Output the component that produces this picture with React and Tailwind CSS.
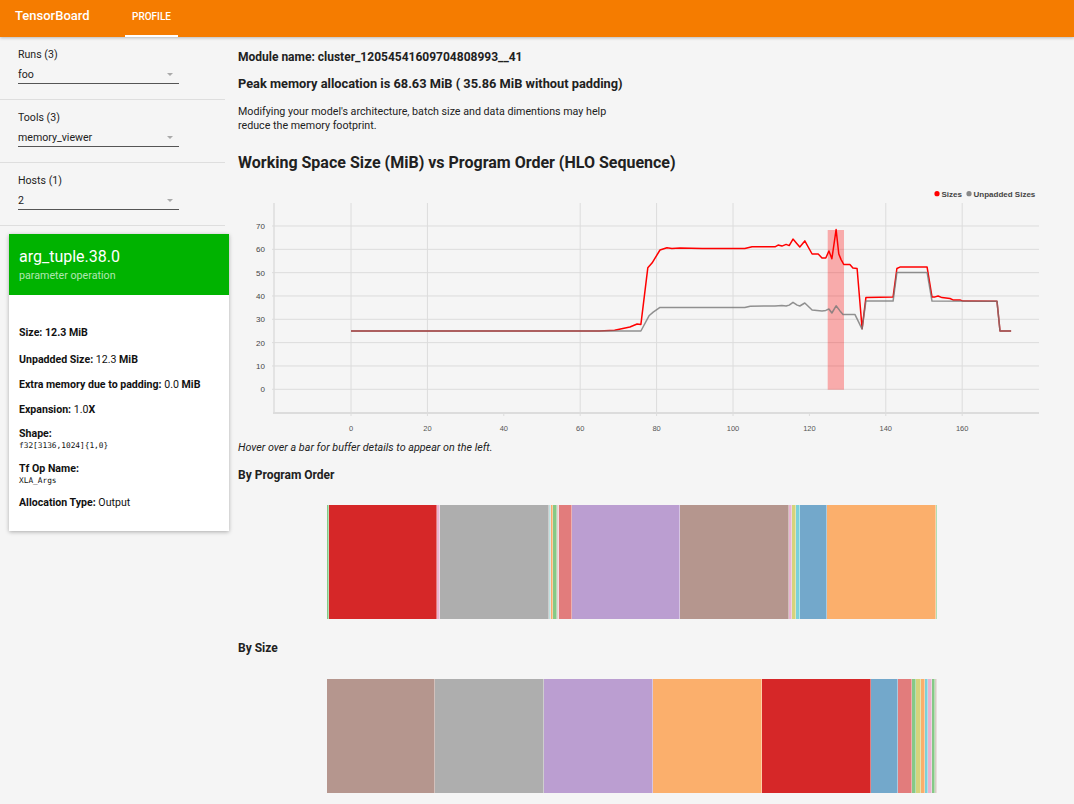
import React from 'react'

// series sampled from the reference chart: [hlo index, MiB]
const SIZES = [[0,25],[65,25],[69,25.3],[73,26.7],[74.9,28],[75.9,27.8],[77.7,52.1],[78.8,54.1],[80.9,59.7],[82.7,60.7],[84,60.4],[86.1,60.6],[92,60.4],[103.1,60.3],[105,61.1],[111,61.1],[111.8,61.8],[112.8,61.4],[113.9,62.1],[114.7,61.6],[115.7,64.4],[116.8,62.3],[117.5,61],[118.8,63.6],[120.7,58],[122.3,58],[123.3,56.3],[124.3,56.3],[125.1,59.3],[125.9,56],[127,68.5],[127.7,58],[128.3,55.6],[129,53.5],[130.6,53.5],[131.4,52],[132.5,51.8],[133.8,26],[134.8,39.3],[141.9,39.6],[142.9,51.8],[143.7,52.4],[150.8,52.4],[152.1,39.6],[152.9,39.6],[153.7,40],[154.7,39.3],[156.8,38.9],[157.6,38.3],[159.4,38.3],[160.2,37.8],[169.1,37.7],[169.9,25],[172.8,25]]
const UNPADDED = [[0,25],[75.9,25],[78,31.5],[79.1,33.1],[80.9,35.1],[86.1,35.1],[103.1,35],[104.5,35.6],[111,35.7],[112.8,35.9],[113.9,35.7],[114.7,36.1],[115.7,37.3],[116.8,36.1],[117.5,35.7],[118.8,37],[120.7,34],[123.3,33.6],[124.3,33.8],[125.1,34.4],[125.9,32.7],[127,35.8],[128,33.6],[128.8,32.1],[131.9,32.1],[133.8,25.8],[134.8,37.8],[141.9,37.8],[142.9,50.1],[150.8,50.1],[152.1,37.8],[169.1,37.7],[169.9,25],[172.8,25]]

const PROGRAM_ORDER = [
  [1.5, '#86c986'], [108.8, '#d62728'], [2.4, '#e8b4d2'], [109.3, '#aeaeae'], [2, '#bfe0e0'],
  [2, '#f9ae6b'], [4.5, '#86c986'], [1.2, '#e8d0d0'], [13.3, '#e27c7c'], [108.4, '#bb9ed1'],
  [108.9, '#b5968e'], [2.4, '#e8b4d2'], [4.3, '#d4d47c'], [4, '#7ad0da'], [27, '#73a8cb'],
  [109, '#fbaf6c'], [1, '#80c880'],
]
const BY_SIZE = [
  [108.3, '#b5968e'], [108.9, '#aeaeae'], [109.3, '#bb9ed1'], [108.5, '#fbaf6c'], [108.8, '#d62728'],
  [27.7, '#73a8cb'], [13.5, '#e27c7c'], [4, '#86c986'], [5.3, '#d4d47c'], [3.4, '#f9ae6b'],
  [3.6, '#7ad0da'], [3.4, '#e8b4d2'], [3.3, '#86c986'], [2, '#d8ccc4'],
]

const px = i => 113 + 3.82 * i
const py = v => 209.3 - 2.333 * v
const toPath = pts => pts.map(([i, v], k) => `${k ? 'L' : 'M'}${px(i).toFixed(1)} ${py(v).toFixed(1)}`).join(' ')

function Chart() {
  const yTicks = [0, 10, 20, 30, 40, 50, 60, 70]
  const xTicks = [0, 20, 40, 60, 80, 100, 120, 140, 160]
  const vLines = [0, 20, 60, 80, 100, 140, 160]
  return (
    <svg width="820" height="260" className="block font-['Liberation_Sans',Arial,sans-serif]">
      {/* legend */}
      <circle cx="699" cy="13.7" r="2.6" fill="#ff0000" />
      <text x="703.5" y="16.6" fontSize="8" fontWeight="700" fill="#444">Sizes</text>
      <circle cx="731" cy="13.7" r="2.6" fill="#888" />
      <text x="735.5" y="16.6" fontSize="8" fontWeight="700" fill="#444">Unpadded Sizes</text>

      {/* grid */}
      {yTicks.map(v => (
        <g key={v}>
          <line x1="34" x2="801" y1={py(v)} y2={py(v)} stroke="#dcdcdc" strokeWidth="1" />
          <text x="27" y={py(v) + 3} fontSize="8" fill="#444" textAnchor="end">{v}</text>
        </g>
      ))}
      {vLines.map(i => (
        <line key={i} x1={px(i)} x2={px(i)} y1="23" y2="233" stroke="#dcdcdc" strokeWidth="1" />
      ))}
      {xTicks.map(i => (
        <g key={i}>
          <line x1={px(i)} x2={px(i)} y1="233" y2="236" stroke="#dcdcdc" strokeWidth="1" />
          <text x={px(i)} y="250.5" fontSize="7.5" fill="#555" textAnchor="middle">{i}</text>
        </g>
      ))}
      <line x1="36" x2="36" y1="23" y2="234" stroke="#dcdcdc" strokeWidth="1.5" />
      <line x1="35" x2="801" y1="233" y2="233" stroke="#dcdcdc" strokeWidth="2" />

      {/* highlighted hlo */}
      <rect x="589.7" y="50" width="16.3" height="159.7" fill="#ff0000" fillOpacity="0.3" />

      <path d={toPath(SIZES)} fill="none" stroke="#ff0000" strokeWidth="1.5" strokeLinejoin="round" />
      <path d={toPath(UNPADDED)} fill="none" stroke="#777" strokeOpacity="0.8" strokeWidth="1.5" strokeLinejoin="round" />
    </svg>
  )
}

function BufferBar({ segments }) {
  return (
    <div className="ml-[89px] flex h-[114px] w-[610px]">
      {segments.map(([w, c], k) => (
        <div key={k} className="h-full border-r border-white/40" style={{ width: w, backgroundColor: c }} />
      ))}
    </div>
  )
}

function Selector({ label, value }) {
  return (
    <div className="h-[63px] border-b border-[#dedede] pl-[18px] pt-[10px]">
      <div className="text-[10.6px] leading-[16px] text-[#222]">{label}</div>
      <div className="mt-[4px] flex h-[17px] w-[161px] items-center justify-between border-b border-[#555] pr-[6px] text-[10.6px] leading-[16px] text-[#222]">
        <span>{value}</span>
        <span className="mb-[1px] h-0 w-0 border-x-[3.5px] border-t-[3.5px] border-x-transparent border-t-[#aaa]" />
      </div>
    </div>
  )
}

export default function App() {
  return (
    <div className="min-h-[804px] bg-[#f5f5f5] font-['Roboto',sans-serif] text-[#212121]">
      <header className="relative z-10 flex h-[37px] bg-[#f57c00] shadow-[0_1px_3px_rgba(0,0,0,0.25)]">
        <div className="flex w-[125px] items-center pb-[5px] pl-[15px] text-[13px] font-medium text-white">TensorBoard</div>
        <div className="flex w-[53px] items-center justify-center border-b-2 border-white pb-[3px] text-[10px] font-medium text-white">PROFILE</div>
      </header>

      <div className="flex">
        <aside className="w-[225px] shrink-0">
          <Selector label="Runs (3)" value="foo" />
          <Selector label="Tools (3)" value="memory_viewer" />
          <Selector label="Hosts (1)" value="2" />

          <div className="ml-[9px] mt-[8px] w-[220px] bg-white shadow-[0_1px_4px_rgba(0,0,0,0.3)]">
            <div className="h-[61px] bg-[#00b300] px-[10px] pt-[12px]">
              <div className="text-[16px] leading-[22px] text-white">arg_tuple.38.0</div>
              <div className="mt-[1px] text-[10.7px] leading-[14px] text-white/70">parameter operation</div>
            </div>
            <div className="px-[10px] pb-[21px] pt-[31px] text-[10.6px] text-[#111]">
              <div className="font-bold leading-[14px]">Size: 12.3 MiB</div>
              <div className="mt-[13px] leading-[14px]"><b>Unpadded Size:</b> 12.3 <b>MiB</b></div>
              <div className="mt-[11px] leading-[14px]"><b>Extra memory due to padding:</b> 0.0 <b>MiB</b></div>
              <div className="mt-[11px] leading-[14px]"><b>Expansion:</b> 1.0<b>X</b></div>
              <div className="mt-[11px] font-bold leading-[12px]">Shape:</div>
              <div className="font-['DejaVu_Sans_Mono',monospace] text-[7.8px] leading-[11px]">f32[3136,1024]{'{'}1,0{'}'}</div>
              <div className="mt-[12px] font-bold leading-[12px]">Tf Op Name:</div>
              <div className="font-['DejaVu_Sans_Mono',monospace] text-[7.8px] leading-[11px]">XLA_Args</div>
              <div className="mt-[10px] leading-[14px]"><b>Allocation Type:</b> Output</div>
            </div>
          </div>
        </aside>

        <main className="flex-1 pl-[13px]">
          <div className="mt-[12px] text-[12px] font-bold leading-[16px]">Module name: cluster_12054541609704808993__41</div>
          <div className="mt-[10px] text-[12.8px] font-bold leading-[18px]">Peak memory allocation is 68.63 MiB ( 35.86 MiB without padding)</div>
          <p className="mt-[12px] w-[372px] text-[10.7px] leading-[14px] text-[#222]">
            Modifying your model's architecture, batch size and data dimentions may help reduce the memory footprint.
          </p>
          <div className="mt-[20px] text-[16px] font-bold leading-[20px]">Working Space Size (MiB) vs Program Order (HLO Sequence)</div>
          <div className="mt-[7px]">
            <Chart />
          </div>
          <div className="mt-[1px] text-[10.75px] italic leading-[14px] text-[#222]">Hover over a bar for buffer details to appear on the left.</div>
          <div className="mt-[12px] text-[12px] font-bold leading-[16px]">By Program Order</div>
          <div className="mt-[22px]">
            <BufferBar segments={PROGRAM_ORDER} />
          </div>
          <div className="mt-[21px] text-[12px] font-bold leading-[16px]">By Size</div>
          <div className="mt-[23px]">
            <BufferBar segments={BY_SIZE} />
          </div>
        </main>
      </div>
    </div>
  )
}
